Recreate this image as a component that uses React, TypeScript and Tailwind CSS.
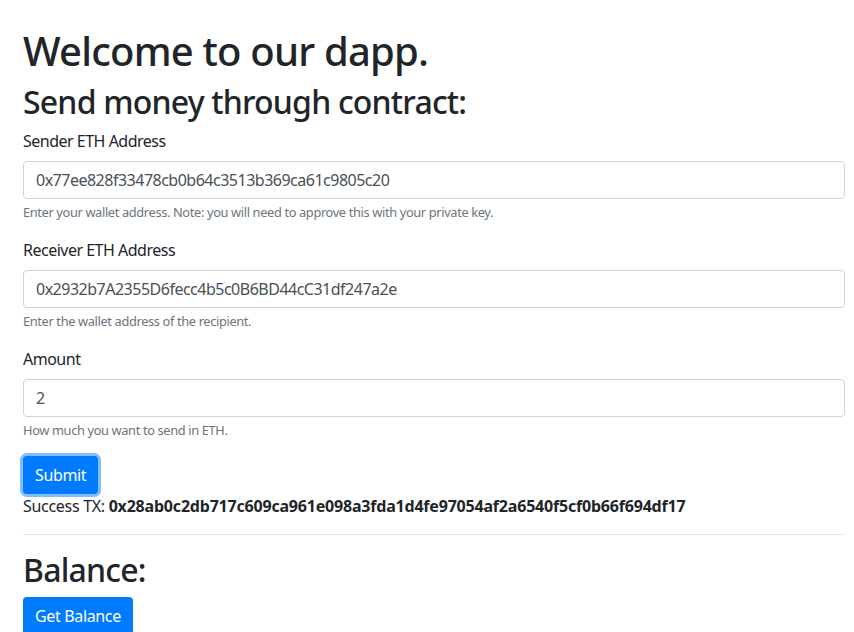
import React from 'react';

const fields = [
  {
    label: 'Sender ETH Address',
    value: '0x77ee828f33478cb0b64c3513b369ca61c9805c20',
    help: 'Enter your wallet address. Note: you will need to approve this with your private key.',
  },
  {
    label: 'Receiver ETH Address',
    value: '0x2932b7A2355D6fecc4b5c0B6BD44cC31df247a2e',
    help: 'Enter the wallet address of the recipient.',
  },
  {
    label: 'Amount',
    value: '2',
    help: 'How much you want to send in ETH.',
  },
];

export default function App() {
  return (
    <div
      className="min-h-screen bg-white pt-[27px] pl-[23px] pr-[9px] text-[#212529]"
      style={{ fontFamily: '"Noto Sans", "Open Sans", Arial, sans-serif' }}
    >
      <h1 className="mb-2 text-[40px] font-medium leading-[48px] tracking-[-0.8px]">Welcome to our dapp.</h1>
      <h2 className="mb-2 text-[32px] font-medium leading-[38px] tracking-[-0.8px]">Send money through contract:</h2>

      <form onSubmit={(e) => e.preventDefault()}>
        {fields.map((f) => (
          <div key={f.label} className="mb-4">
            <label className="mb-2 block text-base leading-6 tracking-[-0.5px]">{f.label}</label>
            <input
              readOnly
              value={f.value}
              className="block h-[38px] w-full rounded border border-[#ced4da] bg-white px-3 text-base tracking-[-0.5px] text-[#495057] outline-none"
            />
            <small className="mt-1 block text-[12.8px] leading-[19px] tracking-[-0.35px] text-[#6c757d]">{f.help}</small>
          </div>
        ))}
        <button
          type="submit"
          className="h-[38px] rounded bg-[#007bff] px-3 text-base leading-6 tracking-[-0.35px] text-white shadow-[0_0_0_3px_rgba(0,123,255,0.5)]"
        >
          Submit
        </button>
      </form>

      <p className="text-base leading-6 tracking-[-0.3px]">
        Success TX: <b className="font-bold tracking-[-0.2px]">0x28ab0c2db717c609ca961e098a3fda1d4fe97054af2a6540f5cf0b66f694df17</b>
      </p>

      <hr className="my-4 border-0 border-t border-black/10" />

      <h2 className="mb-2 text-[32px] font-medium leading-[38px] tracking-[-0.8px]">Balance:</h2>
      <button className="h-[38px] rounded bg-[#007bff] px-3 text-base leading-6 tracking-[-0.35px] text-white">Get Balance</button>
    </div>
  );
}
